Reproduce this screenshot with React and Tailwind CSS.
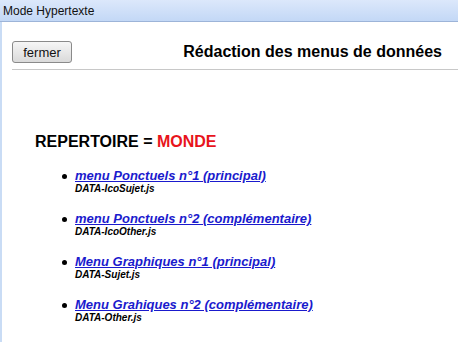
import React from 'react';

const menus = [
  { label: 'menu Ponctuels n°1 (principal)', file: 'DATA-IcoSujet.js' },
  { label: 'menu Ponctuels n°2 (complémentaire)', file: 'DATA-IcoOther.js' },
  { label: 'Menu Graphiques n°1 (principal)', file: 'DATA-Sujet.js' },
  { label: 'Menu Grahiques n°2 (complémentaire)', file: 'DATA-Other.js' },
];

const App = () => {
  return (
    <div className="flex h-[342px] w-[458px] flex-col overflow-hidden bg-white font-['Liberation_Sans',Arial,sans-serif] text-black">
      {/* Title bar */}
      <div className="flex h-[22px] shrink-0 items-center border-b border-[#9db4d8] bg-gradient-to-b from-[#dce8fb] to-[#c3d8f6] pl-[3px] text-[12px] text-[#111]">
        Mode Hypertexte
      </div>

      <div className="flex flex-1 flex-col border-l-2 border-[#c9dcf5]">
        {/* Header */}
        <div className="ml-[10px] mt-[18px] flex items-center justify-between border-b border-[#c8c8c8] pb-[5px] pr-[16px]">
          <button className="h-[22px] w-[60px] rounded-[3px] border border-[#8a8a8a] bg-gradient-to-b from-[#f6f6f6] to-[#dadada] text-[13px] leading-none text-[#111]">
            fermer
          </button>
          <h1 className="text-[16px] font-bold">Rédaction des menus de données</h1>
        </div>

        {/* Content */}
        <div className="ml-[33px] mt-[63px] text-[16px] font-bold leading-[18px]">
          REPERTOIRE = <span className="text-[#e8141c]">MONDE</span>
        </div>

        <ul className="mt-[17px] flex flex-col gap-[16px] pl-[60px]">
          {menus.map((m) => (
            <li key={m.file} className="flex">
              <span className="mr-[8px] mt-[6px] h-[5px] w-[5px] shrink-0 rounded-full bg-black" />
              <div className="flex flex-col">
                <a href="#" className="text-[13px] font-bold italic leading-[15px] text-[#1a1acd] underline">
                  {m.label}
                </a>
                <span className="text-[10px] font-bold italic leading-[12px]">{m.file}</span>
              </div>
            </li>
          ))}
        </ul>
      </div>
    </div>
  );
};

export default App;
